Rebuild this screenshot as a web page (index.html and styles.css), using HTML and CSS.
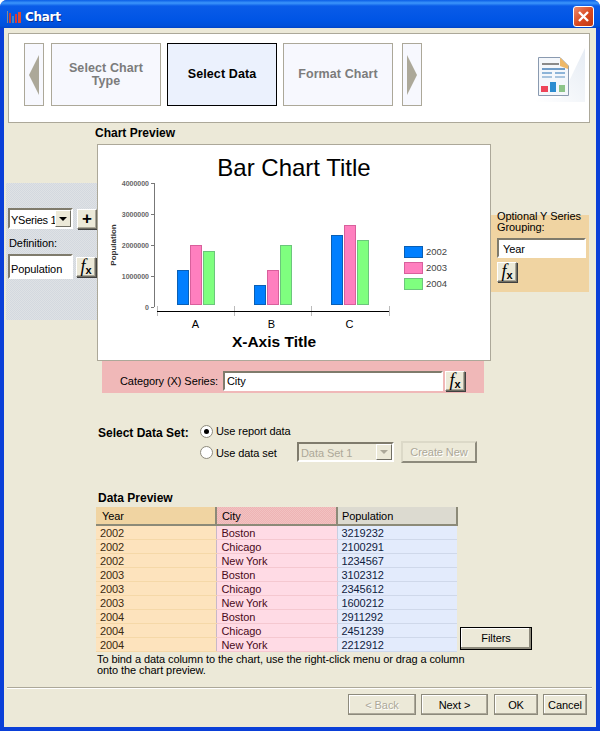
FILE: index.html
```html
<!DOCTYPE html>
<html lang="en">
<head>
  <meta charset="UTF-8">
  <title>Chart</title>
  <link rel="stylesheet" href="styles.css">
</head>
<body>

<div class="window">
  <div class="titlebar">
    <svg class="title-icon" width="16" height="16" viewBox="0 0 16 16">
      <rect x="1" y="2" width="1" height="12" fill="#8a8a8a"/>
      <rect x="3" y="4" width="2" height="10" fill="#c8403a"/>
      <rect x="6" y="7" width="2" height="7" fill="#3b8ac4"/>
      <rect x="9" y="5" width="2" height="9" fill="#d83a3a"/>
      <rect x="12" y="3" width="3" height="11" fill="#e04a30"/>
    </svg>
    <span class="title-text">Chart</span>
    <div class="close-btn">
      <svg width="13" height="13" viewBox="0 0 13 13">
        <path d="M2 2 L11 11 M11 2 L2 11" stroke="#fff" stroke-width="2.4"/>
      </svg>
    </div>
  </div>

  <div class="content">
    <div class="wizard">
      <div class="arrow-btn">
        <svg width="10" height="40" viewBox="0 0 10 40"><polygon points="0,20 10,0 10,40" fill="#aca899"/></svg>
      </div>
      <div class="step">Select Chart<br>Type</div>
      <div class="step step-active">Select Data</div>
      <div class="step">Format Chart</div>
      <div class="arrow-btn arrow-next">
        <svg width="10" height="40" viewBox="0 0 10 40"><polygon points="10,20 0,0 0,40" fill="#aca899"/></svg>
      </div>
      <svg class="wizard-icon" width="50" height="54" viewBox="0 0 50 54">
        <defs>
          <linearGradient id="glow" x1="0" y1="1" x2="1" y2="0">
            <stop offset="0" stop-color="#fff"/>
            <stop offset="1" stop-color="#e6ecf4"/>
          </linearGradient>
        </defs>
        <polygon points="4,50 26,50 50,0 50,54 0,54" fill="url(#glow)"/>
        <path d="M3.5 9.5 H25 L33.5 18 V47.5 H3.5 Z" fill="#f4f7fb" stroke="#8a9ab0"/>
        <path d="M25 9.5 L33.5 18 L33 21 L25 18 Z" fill="#eeb868"/>
        <rect x="7" y="15" width="17" height="2" fill="#8a8a8a"/>
        <rect x="7" y="20" width="23" height="2" fill="#6f9cc8"/>
        <rect x="7" y="24" width="10" height="2" fill="#8db4d8"/>
        <rect x="20" y="24" width="10" height="2" fill="#8db4d8"/>
        <rect x="7" y="28" width="10" height="2" fill="#a8c4de"/>
        <rect x="20" y="28" width="10" height="2" fill="#a8c4de"/>
        <rect x="6" y="38" width="7" height="6" fill="#ee4458"/>
        <rect x="15" y="34" width="6" height="10" fill="#2c8cd0"/>
        <rect x="24" y="37" width="6" height="7" fill="#8cc488"/>
      </svg>
    </div>

    <div class="section-label preview-label">Chart Preview</div>

    <div class="chart-row">
      <div class="y-panel">
        <div class="control-row">
          <div class="combo combo-series">
            <span class="combo-value">YSeries 1</span>
            <span class="combo-btn"><i class="combo-arrow"></i></span>
          </div>
          <button class="btn btn-square plus-btn">+</button>
        </div>
        <div class="def-label">Definition:</div>
        <div class="control-row def-row">
          <input class="field def-field" type="text" value="Population">
          <button class="btn btn-square"><span class="fx"><i>f</i><b>x</b></span></button>
        </div>
      </div>

      <div class="chart-box">
        <svg class="chart" width="392" height="215" viewBox="98 145 392 215">
          <text class="chart-title" x="294" y="176" text-anchor="middle">Bar Chart Title</text>

          <g class="tick-labels" text-anchor="end">
            <text x="149" y="186">4000000</text>
            <text x="149" y="217">3000000</text>
            <text x="149" y="248">2000000</text>
            <text x="149" y="279">1000000</text>
            <text x="149" y="310">0</text>
          </g>
          <text class="axis-y-title" transform="translate(116 245) rotate(-90)" text-anchor="middle">Population</text>
          <path d="M154.5 183 V307 M151 183.5 H154 M151 214.5 H154 M151 245.5 H154 M151 276.5 H154 M151 307.5 H154" stroke="#777" fill="none"/>

          <path d="M157.5 306 V316 M234.5 306 V316 M311.5 306 V316 M389.5 306 V316" stroke="#bbb" fill="none"/>
          <path d="M157 311.5 H389" stroke="#000" fill="none"/>

          <g class="bars-2002">
            <rect x="177.5" y="270.5" width="11" height="34"/>
            <rect x="254.5" y="285.5" width="11" height="19"/>
            <rect x="331.5" y="235.5" width="11" height="69"/>
          </g>
          <g class="bars-2003">
            <rect x="190.5" y="245.5" width="11" height="59"/>
            <rect x="267.5" y="270.5" width="11" height="34"/>
            <rect x="344.5" y="225.5" width="11" height="79"/>
          </g>
          <g class="bars-2004">
            <rect x="203.5" y="251.5" width="11" height="53"/>
            <rect x="280.5" y="245.5" width="11" height="59"/>
            <rect x="357.5" y="240.5" width="11" height="64"/>
          </g>

          <g class="bars-2002"><rect x="404.5" y="246.5" width="18" height="11"/></g>
          <g class="bars-2003"><rect x="404.5" y="262.5" width="18" height="11"/></g>
          <g class="bars-2004"><rect x="404.5" y="278.5" width="18" height="11"/></g>
          <g class="legend-text">
            <text x="426" y="255">2002</text>
            <text x="426" y="271">2003</text>
            <text x="426" y="287">2004</text>
          </g>

          <g class="cat-labels" text-anchor="middle">
            <text x="195.5" y="328">A</text>
            <text x="271.5" y="328">B</text>
            <text x="349.5" y="328">C</text>
          </g>
          <text class="x-title" x="274" y="347" text-anchor="middle">X-Axis Title</text>
        </svg>
      </div>

      <div class="group-panel">
        <div class="group-label">Optional Y Series<br>Grouping:</div>
        <input class="field group-field" type="text" value="Year">
        <button class="btn btn-square"><span class="fx"><i>f</i><b>x</b></span></button>
      </div>
    </div>

    <div class="category-bar">
      <label class="category-label">Category (X) Series:</label>
      <input class="field category-field" type="text" value="City">
      <button class="btn btn-square"><span class="fx"><i>f</i><b>x</b></span></button>
    </div>

    <div class="dataset">
      <div class="section-label dataset-label">Select Data Set:</div>
      <div class="dataset-options">
        <div class="option option-first">
          <span class="radio radio-on"></span>
          <span>Use report data</span>
        </div>
        <div class="option">
          <span class="radio"></span>
          <span class="option-text">Use data set</span>
          <div class="combo combo-disabled">
            <span class="combo-value">Data Set 1</span>
            <span class="combo-btn"><i class="combo-arrow"></i></span>
          </div>
          <button class="btn btn-create" disabled>Create New</button>
        </div>
      </div>
    </div>

    <div class="section-label data-label">Data Preview</div>
    <div class="data-row">
      <table class="data-table">
        <thead>
          <tr>
            <th class="col-year">Year</th>
            <th class="col-city">City</th>
            <th class="col-pop">Population</th>
          </tr>
        </thead>
        <tbody>
          <tr><td class="col-year">2002</td><td class="col-city">Boston</td><td class="col-pop">3219232</td></tr>
          <tr><td class="col-year">2002</td><td class="col-city">Chicago</td><td class="col-pop">2100291</td></tr>
          <tr><td class="col-year">2002</td><td class="col-city">New York</td><td class="col-pop">1234567</td></tr>
          <tr><td class="col-year">2003</td><td class="col-city">Boston</td><td class="col-pop">3102312</td></tr>
          <tr><td class="col-year">2003</td><td class="col-city">Chicago</td><td class="col-pop">2345612</td></tr>
          <tr><td class="col-year">2003</td><td class="col-city">New York</td><td class="col-pop">1600212</td></tr>
          <tr><td class="col-year">2004</td><td class="col-city">Boston</td><td class="col-pop">2911292</td></tr>
          <tr><td class="col-year">2004</td><td class="col-city">Chicago</td><td class="col-pop">2451239</td></tr>
          <tr><td class="col-year">2004</td><td class="col-city">New York</td><td class="col-pop">2212912</td></tr>
        </tbody>
      </table>
      <button class="btn btn-filters">Filters</button>
    </div>
    <p class="help">To bind a data column to the chart, use the right-click menu or drag a column<br>onto the chart preview.</p>

    <div class="separator"></div>

    <div class="footer">
      <button class="btn btn-back" disabled>&lt; Back</button>
      <button class="btn btn-next">Next &gt;</button>
      <button class="btn btn-ok">OK</button>
      <button class="btn btn-cancel">Cancel</button>
    </div>
  </div>
</div>

</body>
</html>
```

FILE: styles.css
```css
* {
  box-sizing: border-box;
}
html, body {
  margin: 0;
  padding: 0;
}
body {
  font-family: "Liberation Sans", Arial, sans-serif;
  font-size: 11px;
  letter-spacing: -0.08px;
  color: #000;
  background: #fff;
}
.window {
  width: 600px;
  height: 731px;
  background: #0a3fd8;
  border-radius: 7px 7px 0 0;
  overflow: hidden;
  display: flex;
  flex-direction: column;
}

/* title bar */
.titlebar {
  height: 28px;
  flex: none;
  display: flex;
  align-items: center;
  padding: 6px 6px 1px 6px;
  background: linear-gradient(to bottom, #0a5de6 0, #3c96fb 3px, #0a5ce8 6px, #0055e5 20px, #0050da 26px, #0044c8 28px);
}
.title-text {
  margin-left: 3px;
  color: #fff;
  font-family: "DejaVu Sans", sans-serif;
  font-size: 12px;
  font-weight: bold;
  letter-spacing: -0.3px;
  text-shadow: 1px 1px 0 #0a2f90;
}
.close-btn {
  margin-left: auto;
  width: 21px;
  height: 21px;
  display: flex;
  align-items: center;
  justify-content: center;
  border: 1px solid #fff;
  border-radius: 3px;
  background: linear-gradient(135deg, #ee8a6c, #d8481f 55%, #c03a14);
}

/* main panel */
.content {
  flex: 1;
  margin: 0 4px 4px;
  background: #ece9d8;
  display: flex;
  flex-direction: column;
}
.section-label {
  font-size: 12px;
  font-weight: bold;
  line-height: 13px;
  letter-spacing: 0;
}

.wizard {
  margin: 5px 6px 0 4px;
  height: 90px;
  background: #fff;
  border: 1px solid #aca899;
  display: flex;
  align-items: flex-start;
  padding: 9px 0 0 15px;
}
.arrow-btn {
  width: 20px;
  height: 63px;
  border: 1px solid #aca899;
  background: #f7f8fe;
  display: flex;
  align-items: center;
  justify-content: center;
}
.arrow-next {
  margin-left: 9px;
}
.step {
  width: 110px;
  height: 63px;
  margin-left: 6px;
  border: 1px solid #aca899;
  background: #f7f8fe;
  color: #7c7c7c;
  font-size: 12.5px;
  font-weight: bold;
  letter-spacing: 0.1px;
  line-height: 13px;
  text-align: center;
  display: flex;
  align-items: center;
  justify-content: center;
}
.arrow-btn + .step {
  margin-left: 7px;
}
.step-active {
  border-color: #000;
  background: #ebf1fd;
  color: #000;
}
.wizard-icon {
  margin: 5px 4px 0 auto;
}

.preview-label {
  margin: 4px 0 4px 91px;
}
.chart-row {
  display: flex;
  align-items: flex-start;
  margin-left: 2px;
  height: 217px;
}

/* left panel */
.y-panel {
  width: 91px;
  height: 137px;
  margin-top: 39px;
  padding: 25px 0 0 2px;
  background: repeating-conic-gradient(#d3d8df 0 25%, #dfe2e5 0 50%) 0 0 / 2px 2px;
}
.control-row {
  display: flex;
  align-items: center;
}
.combo {
  display: flex;
  align-items: center;
  background: #fff;
  border: 2px solid;
  border-color: #7f7b6c #fff #fff #7f7b6c;
}
.combo-series {
  width: 65px;
  height: 21px;
  margin-right: 4px;
}
.combo-series .combo-value {
  padding: 3px 0 0 1px;
  letter-spacing: -0.25px;
}
.combo-value {
  flex: 1;
  padding-left: 2px;
  white-space: nowrap;
  overflow: hidden;
}
.combo-btn {
  width: 16px;
  height: 100%;
  flex: none;
  display: flex;
  align-items: center;
  justify-content: center;
  background: #ece9d8;
  border: 1px solid;
  border-color: #fff #716f64 #716f64 #fff;
}
.combo-arrow {
  width: 0;
  height: 0;
  border: 4px solid transparent;
  border-top: 4px solid #000;
  border-bottom: 0;
}
.def-label {
  margin-top: 7px;
  padding-left: 1px;
  line-height: 14px;
}
.def-row {
  margin-top: 4px;
}
.field {
  display: block;
  margin: 0;
  font: inherit;
  letter-spacing: inherit;
  color: #000;
  background: #fff;
  border: 2px solid;
  border-color: #7f7b6c #fff #fff #7f7b6c;
  outline: none;
}
.def-field {
  width: 65px;
  height: 25px;
  margin-right: 3px;
  padding: 4px 1px 0;
}
.btn {
  display: block;
  margin: 0;
  padding: 0;
  font: inherit;
  letter-spacing: inherit;
  color: #000;
  background: #ece9d8;
  border: 1px solid;
  border-color: #fff #716f64 #716f64 #fff;
  box-shadow: inset -1px -1px 0 #aca899, 1px 1px 0 #404040;
}
.btn:disabled {
  color: #aca899;
  text-shadow: 1px 1px 0 #fff;
}
.btn-square {
  width: 20px;
  height: 20px;
  flex: none;
}
.plus-btn {
  font-size: 17px;
  font-weight: bold;
  line-height: 15px;
}
.fx {
  font-family: "Liberation Serif", serif;
  font-size: 18px;
  line-height: 16px;
  white-space: nowrap;
}
.fx i {
  font-style: italic;
}
.fx b {
  font-family: "Liberation Sans", sans-serif;
  font-size: 11px;
  position: relative;
  top: 2px;
}

/* chart */
.chart-box {
  width: 394px;
  height: 217px;
  flex: none;
  background: #fff;
  border: 1px solid #aca899;
}
.chart {
  display: block;
  letter-spacing: 0;
}
.chart-title {
  font-family: "Liberation Sans", sans-serif;
  font-size: 24px;
}
.tick-labels text {
  font-family: "Liberation Sans", sans-serif;
  font-size: 7px;
  font-weight: bold;
  fill: #666;
}
.axis-y-title {
  font-family: "Liberation Sans", sans-serif;
  font-size: 8px;
  font-weight: bold;
  fill: #333;
}
.bars-2002 rect {
  fill: #007fff;
  stroke: #0a5fb4;
}
.bars-2003 rect {
  fill: #ff7fbf;
  stroke: #d8609c;
}
.bars-2004 rect {
  fill: #7fff7f;
  stroke: #6cc67c;
}
.legend-text text {
  font-family: "Liberation Sans", sans-serif;
  font-size: 9.5px;
  fill: #444;
}
.cat-labels text {
  font-family: "Liberation Sans", sans-serif;
  font-size: 11px;
}
.x-title {
  font-family: "Liberation Sans", sans-serif;
  font-size: 15.5px;
  font-weight: bold;
}

/* right panel */
.group-panel {
  width: 98px;
  height: 77px;
  margin-top: 71px;
  padding-left: 6px;
  background: #f0d4a2;
}
.group-label {
  margin-top: -4px;
  line-height: 11px;
}
.group-field {
  width: 89px;
  height: 20px;
  margin: 5px 0 4px;
  padding: 1px 4px 0;
}

/* category */
.category-bar {
  margin-left: 98px;
  width: 382px;
  height: 32px;
  flex: none;
  padding: 0 0 2px 18px;
  display: flex;
  align-items: flex-end;
  background: #f0b8b8;
}
.category-label {
  width: 103px;
  line-height: 20px;
}
.category-field {
  width: 220px;
  height: 20px;
  margin-right: 2px;
  padding: 0 2px;
}

/* data set */
.dataset {
  display: flex;
  margin: 28px 0 0 94px;
}
.dataset-label {
  width: 102px;
  padding-top: 6px;
}
.option {
  display: flex;
  align-items: center;
  height: 22px;
}
.option-first {
  height: 20px;
}
.radio {
  width: 13px;
  height: 13px;
  margin-right: 3px;
  border-radius: 50%;
  border: 1px solid #8d8a7c;
  background: #fff;
  display: flex;
  align-items: center;
  justify-content: center;
}
.radio-on::after {
  content: "";
  width: 5px;
  height: 5px;
  border-radius: 50%;
  background: #000;
}
.option-text {
  width: 81px;
  padding-top: 1px;
}
.combo-disabled {
  width: 97px;
  height: 20px;
  background: #ece9d8;
  color: #aca899;
}
.combo-disabled .combo-value {
  padding-top: 1px;
}
.combo-disabled .combo-arrow {
  border-top-color: #aca899;
}
.btn-create {
  width: 76px;
  height: 22px;
  margin-left: 7px;
  border: 2px solid;
  border-color: #dcd9c8 #8d8a7c #8d8a7c #dcd9c8;
  box-shadow: none;
}

/* data preview */
.data-label {
  margin: 29px 0 2px 94px;
}
.data-row {
  display: flex;
  margin-left: 92px;
}
.data-table {
  width: 362px;
  table-layout: fixed;
  border-collapse: collapse;
  line-height: 12px;
}
.data-table th {
  height: 18px;
  padding: 1px 0 0 6px;
  font-weight: normal;
  text-align: left;
  border-right: 2px solid #8c8a78;
  border-bottom: 2px solid #8c8a78;
}
.data-table th.col-year {
  width: 120px;
  background: #f0d4a2;
}
.data-table th.col-city {
  width: 121px;
  padding-left: 5px;
  background: repeating-conic-gradient(#eeb4b4 0 25%, #f2c2c2 0 50%) 0 0 / 2px 2px;
}
.data-table th.col-pop {
  padding-left: 4px;
  background: #dcdad0;
}
.data-table td {
  height: 14px;
  padding: 1px 0 0 4px;
  border-bottom: 1px solid;
}
.data-table td.col-year {
  background: #fde3bd;
  border-color: #f5d8a8;
  color: #3c2a10;
  border-right: 1px solid #c8b8c8;
}
.data-table td.col-city {
  padding-left: 5px;
  background: repeating-conic-gradient(#ffd3e0 0 25%, #ffe2ea 0 50%) 0 0 / 2px 2px;
  border-color: #f5c8d0;
  color: #4a0a20;
  border-right: 1px solid #c8cfe0;
}
.data-table td.col-pop {
  background: #e3ebfc;
  border-color: #cfd8ea;
  color: #101c40;
}
.btn-filters {
  width: 72px;
  height: 23px;
  margin: 0 0 2px 2px;
  padding-bottom: 2px;
  align-self: flex-end;
  border: 1px solid #000;
  box-shadow: inset -2px -2px 0 #8d8a7c, inset 1px 1px 0 #fff;
}
.help {
  margin: 2px 0 0 93px;
  line-height: 11px;
}
.separator {
  margin: 11px 4px 0 3px;
  height: 2px;
  border-top: 1px solid #aca899;
  border-bottom: 1px solid #fff;
}
.footer {
  display: flex;
  justify-content: flex-end;
  margin-top: 5px;
  padding-right: 9px;
}
.footer .btn {
  height: 21px;
  border: 1px solid #8d8a7c;
  box-shadow: inset -1px -1px 0 #aca899, inset 1px 1px 0 #fff;
}
.btn-back {
  width: 68px;
}
.btn-next {
  width: 67px;
  margin-left: 5px;
}
.btn-ok {
  width: 44px;
  margin-left: 6px;
}
.btn-cancel {
  width: 44px;
  margin-left: 5px;
}
```
